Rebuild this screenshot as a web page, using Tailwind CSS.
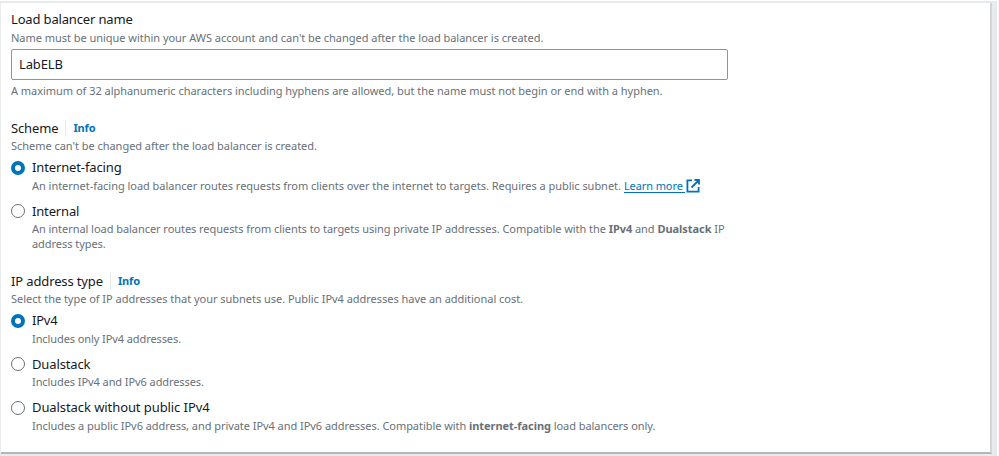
<!DOCTYPE html>
<html lang="en">
<head>
<meta charset="utf-8">
<title>Load balancer basic configuration</title>
<script src="https://cdn.jsdelivr.net/npm/@tailwindcss/browser@4"></script>
</head>
<body class="h-[456px] w-[999px] overflow-hidden bg-white font-['Noto_Sans',sans-serif] text-[11px] leading-[16px] tracking-[-0.03px] text-[#687078]">
<div class="mt-px h-[455px] w-[997px] border-t-2 border-r-2 border-[#e6eaed] bg-[#e9ebed]">
<main class="ml-px h-[451px] w-[991px] border-r-2 border-b-2 border-r-[#d3d6d8] border-b-[#b4b6b9] bg-white pt-[7px] pl-[10px]">
  <section>
    <h2 class="h-5 text-[13px] leading-[19px] tracking-[-0.16px] text-[#16191f]"><span>Load balancer name</span></h2>
    <p><span>Name must be unique within your AWS account and can't be changed after the load balancer is created.</span></p>
    <input class="mt-[3px] block h-[31px] w-[717px] rounded-[2px] border border-[#8d9599] pr-2 pb-[2px] pl-[7px] text-[13px] tracking-[-0.13px] text-[#16191f]" value="LabELB" aria-label="Load balancer name">
    <p class="mt-[3px]"><span>A maximum of 32 alphanumeric characters including hyphens are allowed, but the name must not begin or end with a hyphen.</span></p>
  </section>
  <section class="mt-[19px]">
    <h2 class="flex h-5 items-center text-[13px] leading-5 tracking-[-0.13px] text-[#16191f]"><span>Scheme</span><a class="ml-[7px] h-4 border-l border-[#e6eaed] pl-[7px] text-[11px] leading-4 font-bold text-[#0073bb]">Info</a></h2>
    <p><span>Scheme can't be changed after the load balancer is created.</span></p>
    <div class="mt-1 flex gap-[7px]">
      <i class="mt-[3px] size-[14px] rounded-full border-[4px] border-[#0073bb]"></i>
      <div>
        <h3 class="h-5 text-[13px] leading-[19px] tracking-[-0.13px] text-[#16191f]"><span>Internet-facing</span></h3>
        <p class="flex"><span>An internet-facing load balancer routes requests from clients over the internet to targets. Requires a public subnet.</span>
          <a class="ml-[3px] h-[15px] w-[61px] border-b border-[#0073bb] tracking-[-0.1px] text-[#0073bb]">Learn more</a>
          <svg class="mt-px ml-px size-[14px]" viewBox="0 0 14 14" fill="none" stroke="#0073bb" stroke-width="1.8"><path d="M6 1.4H1.4v11.2h11.2V8M8.5 1H13v4.5M13 1 5.5 8.5"/></svg>
        </p>
      </div>
    </div>
    <div class="mt-[7px] flex gap-[7px]">
      <i class="mt-[3px] size-[14px] rounded-full border border-[#687078]"></i>
      <div>
        <h3 class="h-5 text-[13px] leading-5 tracking-[-0.16px] text-[#16191f]"><span>Internal</span></h3>
        <p class="leading-[15px] tracking-[-0.049px] whitespace-nowrap"><span>An internal load balancer routes requests from clients to targets using private IP addresses. Compatible with the <b>IPv4</b> and <b>Dualstack</b> IP</span><br><span>address types.</span></p>
      </div>
    </div>
  </section>
  <section class="mt-5">
    <h2 class="flex h-5 items-center text-[13px] leading-5 tracking-[-0.13px] text-[#16191f]"><span>IP address type</span><a class="ml-[7px] h-4 border-l border-[#e6eaed] pl-[7px] text-[11px] leading-4 font-bold text-[#0073bb]">Info</a></h2>
    <p><span>Select the type of IP addresses that your subnets use. Public IPv4 addresses have an additional cost.</span></p>
    <div class="mt-1 flex gap-[7px]">
      <i class="mt-[3px] size-[14px] rounded-full border-[4px] border-[#0073bb]"></i>
      <div>
        <h3 class="h-5 text-[13px] leading-[19px] tracking-[-0.2px] text-[#16191f]"><span>IPv4</span></h3>
        <p class="tracking-[-0.09px]"><span>Includes only IPv4 addresses.</span></p>
      </div>
    </div>
    <div class="mt-[7px] flex gap-[7px]">
      <i class="mt-[3px] size-[14px] rounded-full border border-[#687078]"></i>
      <div>
        <h3 class="h-5 text-[13px] leading-5 tracking-[-0.13px] text-[#16191f]"><span>Dualstack</span></h3>
        <p class="tracking-[-0.08px]"><span>Includes IPv4 and IPv6 addresses.</span></p>
      </div>
    </div>
    <div class="mt-2 flex gap-[7px]">
      <i class="mt-[3px] size-[14px] rounded-full border border-[#687078]"></i>
      <div>
        <h3 class="h-5 text-[13px] leading-[19px] tracking-[-0.08px] text-[#16191f]"><span>Dualstack without public IPv4</span></h3>
        <p class="tracking-[-0.05px]"><span>Includes a public IPv6 address, and private IPv4 and IPv6 addresses. Compatible with <b>internet-facing</b> load balancers only.</span></p>
      </div>
    </div>
  </section>
</main>
</div>
</body>
</html>
